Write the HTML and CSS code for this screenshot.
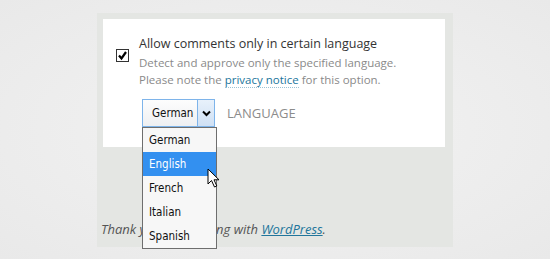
FILE: index.html
```html
<!DOCTYPE html>
<html lang="en">
<head>
    <meta charset="UTF-8">
    <title>Comment language</title>
    <link rel="stylesheet" href="styles.css">
</head>
<body>
    <div class="panel">
        <div class="card">
            <div class="option">
                <span class="checkbox">
                    <svg width="11" height="11" viewBox="0 0 11 11"><path d="M2 5.5 L4.5 8.5 L9 2" fill="none" stroke="#000" stroke-width="2.2"/></svg>
                </span>
                <div class="option-text">
                    <div class="option-title">Allow comments only in certain language</div>
                    <div class="option-desc">Detect and approve only the specified language.<br>Please note the <a href="#" class="notice">privacy notice</a> for this option.</div>
                </div>
            </div>

            <div class="select-row">
                <div class="select-wrap">
                    <div class="select">
                        <span class="select-value">German</span>
                        <span class="select-arrow">
                            <svg width="9" height="7" viewBox="0 0 9 7"><path d="M1 1.5 L4.5 5 L8 1.5" fill="none" stroke="#000" stroke-width="2"/></svg>
                        </span>
                    </div>
                    <ul class="dropdown">
                        <li>German</li>
                        <li class="active">English</li>
                        <li>French</li>
                        <li>Italian</li>
                        <li>Spanish</li>
                    </ul>
                    <svg class="cursor" width="14" height="21" viewBox="0 0 14 21">
                        <path d="M1 1 L1 16 L4.5 12.5 L7.5 19 L9.8 18 L7 11.8 L12 11.8 Z" fill="#fff" stroke="#000" stroke-width="1" stroke-linejoin="miter"/>
                    </svg>
                </div>
                <span class="select-label">LANGUAGE</span>
            </div>
        </div>

        <p class="footer">Thank you for creating with <a href="#">WordPress</a>.</p>
    </div>
</body>
</html>
```

FILE: styles.css
```css
* {
    margin: 0;
    padding: 0;
    box-sizing: border-box;
}

body {
    font-family: "Open Sans", Arial, sans-serif;
    background: radial-gradient(ellipse at center, #f3f3f3 0%, #e9e9e9 100%);
    width: 550px;
    height: 259px;
    overflow: hidden;
}

.panel {
    margin: 13px 0 0 97px;
    width: 356px;
    height: 234px;
    background: #e4e6e3;
    padding: 6px 8px 0 4px;
}

.card {
    background: #fff;
    height: 128px;
    margin-left: 2px;
    padding: 16px 0 0 13px;
}

.option {
    display: flex;
    align-items: flex-start;
    gap: 10px;
}

.checkbox {
    display: flex;
    align-items: center;
    justify-content: center;
    width: 13px;
    height: 13px;
    margin-top: 14px;
    border: 1px solid #333;
    background: #fff;
}

.option-title {
    font-size: 12.5px;
    line-height: 17px;
    color: #333;
}

.option-desc {
    margin-top: 2px;
    font-size: 11.5px;
    line-height: 17px;
    color: #8a8a8a;
}

.notice {
    color: #21759b;
    text-decoration: none;
    border-bottom: 1px dotted #9cc3d5;
}

.select-row {
    display: flex;
    align-items: center;
    gap: 12px;
    margin: 11px 0 0 26px;
}

.select-wrap {
    position: relative;
}

.select {
    display: flex;
    width: 73px;
    height: 28px;
    border: 1px solid #7eb4ea;
    background: linear-gradient(#fdfdfd, #eef0f2);
}

.select-value {
    flex: 1;
    padding-left: 9px;
    font-family: "DejaVu Sans Condensed", "DejaVu Sans", sans-serif;
    font-size: 11.5px;
    line-height: 26px;
    color: #111;
}

.select-arrow {
    display: flex;
    align-items: center;
    justify-content: center;
    width: 17px;
    border-left: 1px solid #7eb4ea;
    background: linear-gradient(#e8f1fb, #cfe0f4);
}

.select-label {
    font-size: 13px;
    color: #8c8c8c;
}

.dropdown {
    position: absolute;
    top: 28px;
    left: 0;
    width: 75px;
    list-style: none;
    background: #f7f7f7;
    border: 1px solid #6e6e6e;
    z-index: 2;
}

.dropdown li {
    height: 24px;
    padding-left: 6px;
    font-family: "DejaVu Sans Condensed", "DejaVu Sans", sans-serif;
    font-size: 11.5px;
    line-height: 24px;
    color: #111;
}

.dropdown li.active {
    background: #3390f0;
    color: #fff;
}

.cursor {
    position: absolute;
    top: 69px;
    left: 65px;
    z-index: 3;
}

.footer {
    margin-top: 73px;
    font-size: 13px;
    font-style: italic;
    color: #555;
}

.footer a {
    color: #21759b;
}
```
